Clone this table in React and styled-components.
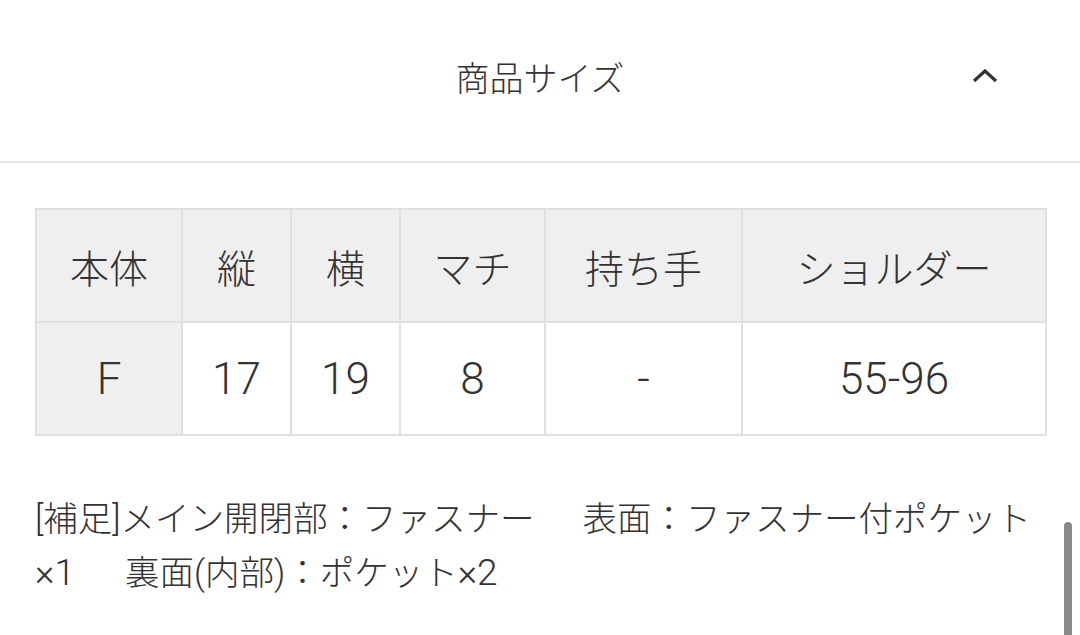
import styled, { createGlobalStyle } from 'styled-components'

const GlobalStyle = createGlobalStyle`
 body {
  margin: 0;
  background: #fff;
  color: #333;
  font-family: Roboto, 'Noto Sans CJK JP', sans-serif;
  font-weight: 300;
 }
`

const Page = styled.div`
 width: 1080px;
 height: 635px;
 overflow: hidden;
 position: relative;
`

const Header = styled.div`
 display: grid;
 grid-template-columns: 1fr auto 1fr;
 align-items: center;
 height: 163px;
 padding-bottom: 9px;
 box-sizing: border-box;
 border-bottom: 2px solid #e6e6e6;
`

const Title = styled.h2`
 grid-column: 2;
 margin: 0;
 font-size: 34px;
 font-weight: 300;
 color: #333;
`

const Toggle = styled.button`
 justify-self: end;
 margin-right: 80px;
 padding: 0;
 border: 0;
 background: none;
 color: #333;
 display: flex;
 cursor: pointer;
`

const Body = styled.div`
 padding: 45px 35px 0;
`

const SizeTable = styled.table`
 width: 1010px;
 border-collapse: collapse;
 table-layout: fixed;
 border: 2px solid #e0e0e0;
`

const Cell = styled.td`
 height: 111px;
 border: 2px solid #e0e0e0;
 background: ${(p) => (p.$shaded ? '#efefef' : '#fff')};
 text-align: center;
 vertical-align: middle;
 padding: 0;
 font-size: ${(p) => (p.$value ? '44px' : '39px')};
 font-weight: 300;
 color: #333;
`

const Note = styled.p`
 margin: 57px 0 0;
 font-size: 34.5px;
 line-height: 53px;
 color: #333;
`

const Digits = styled.span`
 font-size: 37px;
`

const Gap = styled.span`
 display: inline-block;
 width: ${(p) => p.$w}px;
`

const Scrollbar = styled.div`
 position: absolute;
 right: 8px;
 top: 522px;
 width: 8px;
 height: 130px;
 border-radius: 4px;
 background: #8a8a8a;
`

const columns = [
 { label: '本体', value: 'F', width: 146 },
 { label: '縦', value: '17', width: 109 },
 { label: '横', value: '19', width: 109 },
 { label: 'マチ', value: '8', width: 145 },
 { label: '持ち手', value: '-', width: 197 },
 { label: 'ショルダー', value: '55-96', width: 304 },
]

export default function App() {
 return (
  <Page>
   <GlobalStyle />
   <Header>
    <Title>商品サイズ</Title>
    <Toggle aria-label='閉じる'>
     <svg width='30' height='18' viewBox='0 0 30 18'>
      <polyline
       points='4,14 15,4 26,14'
       fill='none'
       stroke='currentColor'
       strokeWidth='3.2'
      />
     </svg>
    </Toggle>
   </Header>
   <Body>
    <SizeTable>
     <colgroup>
      {columns.map((c) => (
       <col key={c.label} style={{ width: c.width }} />
      ))}
     </colgroup>
     <tbody>
      <tr>
       {columns.map((c) => (
        <Cell as='th' key={c.label} $shaded>
         {c.label}
        </Cell>
       ))}
      </tr>
      <tr>
       {columns.map((c, i) => (
        <Cell key={c.label} $shaded={i === 0} $value>
         {c.value}
        </Cell>
       ))}
      </tr>
     </tbody>
    </SizeTable>
    <Note>
     [補足]メイン開閉部：ファスナー<Gap $w={48} />表面：ファスナー付ポケット
     <br />
     <Digits>×1</Digits>
     <Gap $w={50} />裏面(内部)：ポケット<Digits>×2</Digits>
    </Note>
   </Body>
   <Scrollbar />
  </Page>
 )
}
